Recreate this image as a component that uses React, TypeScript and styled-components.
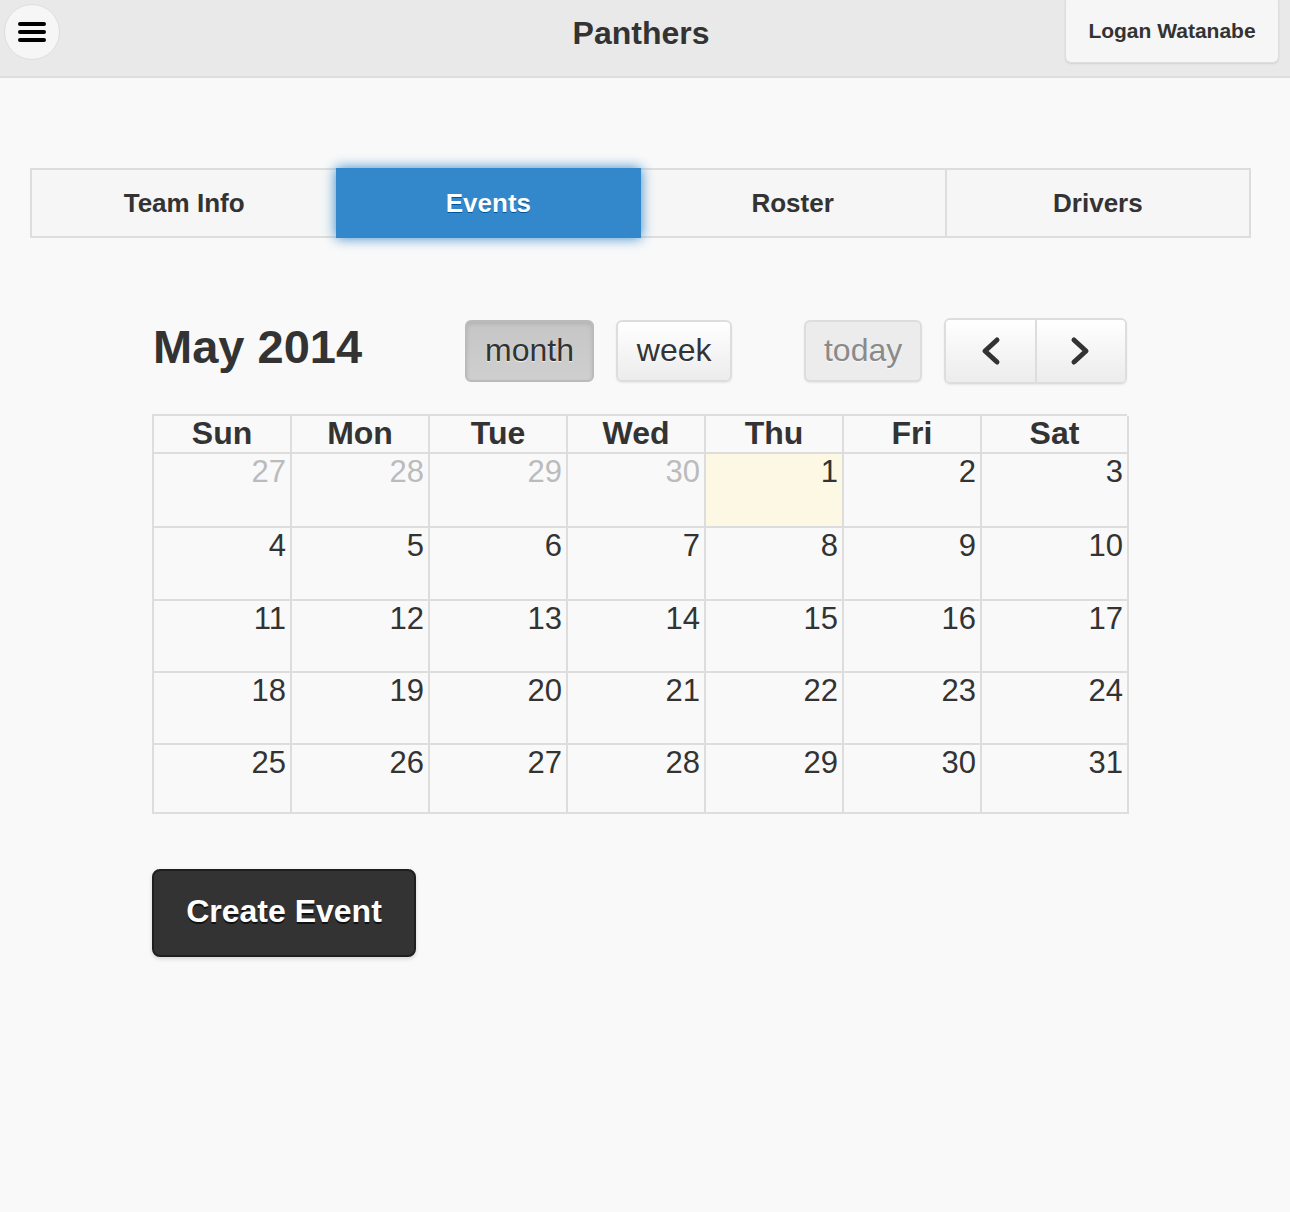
import React from "react";
import styled, { createGlobalStyle } from "styled-components";

const Global = createGlobalStyle`
  html, body { margin: 0; padding: 0; background: #f9f9f9; }
  body { font-family: "Liberation Sans", Arial, Helvetica, sans-serif; color: #333; }
`;

const Page = styled.div`
  width: 1290px;
  min-height: 1212px;
  background: #f9f9f9;
`;

const Header = styled.header`
  height: 76px;
  background: #e9e9e9;
  border-bottom: 2px solid #dddddd;
  display: grid;
  grid-template-columns: 1fr auto 1fr;
  align-items: start;
  position: relative;
`;

const MenuButton = styled.button`
  margin: 4px 0 0 4px;
  width: 56px;
  height: 56px;
  border-radius: 50%;
  background: #f6f6f6;
  border: 1px solid #dddddd;
  display: flex;
  align-items: center;
  justify-content: center;
  padding: 0;
  justify-self: start;
`;

const Title = styled.h1`
  margin: 0 8px 0 0;
  font-size: 32px;
  font-weight: bold;
  line-height: 66px;
  color: #333;
  text-shadow: 0 1px 0 #eee;
`;

const UserButton = styled.button`
  justify-self: end;
  margin-right: 11px;
  height: 63px;
  width: 214px;
  background: #f6f6f6;
  border: 1px solid #dddddd;
  border-top: none;
  border-radius: 0 0 6px 6px;
  font-family: inherit;
  font-size: 21px;
  font-weight: bold;
  color: #333;
  padding: 0;
  box-shadow: 0 1px 2px rgba(0,0,0,0.1);
`;

const Content = styled.main`
  padding: 90px 38px 0 30px;
`;

const Tabs = styled.nav`
  display: grid;
  grid-template-columns: repeat(4, 1fr);
  border: 2px solid #dddddd;
  height: 66px;
  width: 1217px;
`;

const Tab = styled.div<{ $active?: boolean; $divider?: boolean }>`
  display: flex;
  align-items: center;
  justify-content: center;
  font-size: 26px;
  font-weight: bold;
  background: ${p => (p.$active ? "#3388cc" : "#f6f6f6")};
  color: ${p => (p.$active ? "#fff" : "#333")};
  text-shadow: ${p => (p.$active ? "0 1px 0 #005599" : "0 1px 0 #f3f3f3")};
  border-left: ${p => (p.$divider ? "2px solid #dddddd" : "none")};
  box-shadow: ${p => (p.$active ? "0 0 12px #3388cc" : "none")};
  margin: ${p => (p.$active ? "-2px 0" : "0")};
  position: relative;
  z-index: ${p => (p.$active ? 1 : 0)};
`;

const Calendar = styled.section`
  margin: 82px 0 0 122px;
  width: 975px;
`;

const Toolbar = styled.div`
  display: flex;
  align-items: center;
  height: 62px;
  margin-bottom: 32px;
`;

const MonthTitle = styled.h2`
  margin: 0 0 10px 1px;
  font-size: 47px;
  font-weight: bold;
  width: 314px;
  color: #333;
`;

const ViewButton = styled.button<{ $active?: boolean; $dim?: boolean; $w: number }>`
  width: ${p => p.$w}px;
  height: 62px;
  border: 2px solid ${p => (p.$active ? "#bbb" : "#ddd")};
  border-radius: 6px;
  font-family: inherit;
  font-size: 32px;
  color: ${p => (p.$dim ? "#8a8a8a" : "#333")};
  background: ${p =>
    p.$active
      ? "linear-gradient(#c6c6c6, #cfcfcf)"
      : p.$dim
      ? "#ececec"
      : "linear-gradient(#ffffff, #ececec)"};
  box-shadow: ${p =>
    p.$active ? "inset 0 2px 4px rgba(0,0,0,0.1)" : "0 1px 2px rgba(0,0,0,0.08)"};
  text-shadow: 0 1px 1px rgba(255,255,255,0.75);
  padding: 0 0 2px;
  margin-right: 22px;
`;

const Spacer = styled.div<{ $w: number }>`
  width: ${p => p.$w}px;
`;

const NavGroup = styled.div`
  display: flex;
  height: 62px;
  border: 2px solid #ddd;
  border-radius: 6px;
  overflow: hidden;
  box-shadow: 0 1px 2px rgba(0,0,0,0.08);
`;

const NavButton = styled.button<{ $first?: boolean }>`
  width: ${p => (p.$first ? 91 : 89)}px;
  border: none;
  border-right: ${p => (p.$first ? "2px solid #dddddd" : "none")};
  background: linear-gradient(#ffffff, #ececec);
  display: flex;
  align-items: center;
  justify-content: center;
  padding: 0;
`;

const Grid = styled.div`
  display: grid;
  grid-template-columns: repeat(6, 138px) 147px;
  grid-template-rows: 38px 74px 73px 72px 72px 69px;
  border-top: 2px solid #ddd;
  border-left: 2px solid #ddd;
  width: 975px;
  box-sizing: border-box;
`;

const HeadCell = styled.div`
  border-right: 2px solid #ddd;
  border-bottom: 2px solid #ddd;
  font-size: 32px;
  font-weight: bold;
  text-align: center;
  line-height: 34px;
  color: #333;
`;

const DayCell = styled.div<{ $other?: boolean; $today?: boolean }>`
  border-right: 2px solid #ddd;
  border-bottom: 2px solid #ddd;
  background: ${p => (p.$today ? "#fcf8e3" : "transparent")};
  color: ${p => (p.$other ? "#bbbbbb" : "#333")};
  font-size: 31px;
  text-align: right;
  padding: 1px 4px 0 0;
  line-height: 34px;
`;

const CreateButton = styled.button`
  margin-top: 55px;
  width: 264px;
  height: 88px;
  background: #333333;
  border: 2px solid #1f1f1f;
  border-radius: 8px;
  color: #fff;
  font-family: inherit;
  font-size: 32px;
  font-weight: bold;
  text-shadow: 0 2px 0 #111;
  box-shadow: 0 2px 4px rgba(0,0,0,0.15);
  padding: 0 0 4px;
`;

const Chevron = ({ dir }: { dir: "left" | "right" }) => (
  <svg width="24" height="32" viewBox="0 0 24 32">
    <path
      d={dir === "left" ? "M19 5 L7 16 L19 27" : "M5 5 L17 16 L5 27"}
      fill="none"
      stroke="#333"
      strokeWidth="5"
      strokeLinecap="round"
      strokeLinejoin="round"
    />
  </svg>
);

const days = ["Sun", "Mon", "Tue", "Wed", "Thu", "Fri", "Sat"];

const cells: { n: number; other?: boolean; today?: boolean }[] = [
  { n: 27, other: true },
  { n: 28, other: true },
  { n: 29, other: true },
  { n: 30, other: true },
  { n: 1, today: true },
  ...Array.from({ length: 30 }, (_, i) => ({ n: i + 2 })),
];

export default function App() {
  return (
    <Page>
      <Global />
      <Header>
        <MenuButton aria-label="menu">
          <svg width="30" height="22" viewBox="0 0 30 22">
            <g stroke="#000" strokeWidth="4" strokeLinecap="round">
              <line x1="3" y1="3" x2="27" y2="3" />
              <line x1="3" y1="11" x2="27" y2="11" />
              <line x1="3" y1="19" x2="27" y2="19" />
            </g>
          </svg>
        </MenuButton>
        <Title>Panthers</Title>
        <UserButton>Logan Watanabe</UserButton>
      </Header>
      <Content>
        <Tabs>
          <Tab>Team Info</Tab>
          <Tab $active>Events</Tab>
          <Tab>Roster</Tab>
          <Tab $divider>Drivers</Tab>
        </Tabs>
        <Calendar>
          <Toolbar>
            <MonthTitle>May 2014</MonthTitle>
            <ViewButton $active $w={130}>month</ViewButton>
            <ViewButton $w={117}>week</ViewButton>
            <Spacer $w={50} />
            <ViewButton $dim $w={119}>today</ViewButton>
            <NavGroup>
              <NavButton $first>
                <Chevron dir="left" />
              </NavButton>
              <NavButton>
                <Chevron dir="right" />
              </NavButton>
            </NavGroup>
          </Toolbar>
          <Grid>
            {days.map(d => (
              <HeadCell key={d}>{d}</HeadCell>
            ))}
            {cells.map((c, i) => (
              <DayCell key={i} $other={c.other} $today={c.today}>
                {c.n}
              </DayCell>
            ))}
          </Grid>
          <CreateButton>Create Event</CreateButton>
        </Calendar>
      </Content>
    </Page>
  );
}
